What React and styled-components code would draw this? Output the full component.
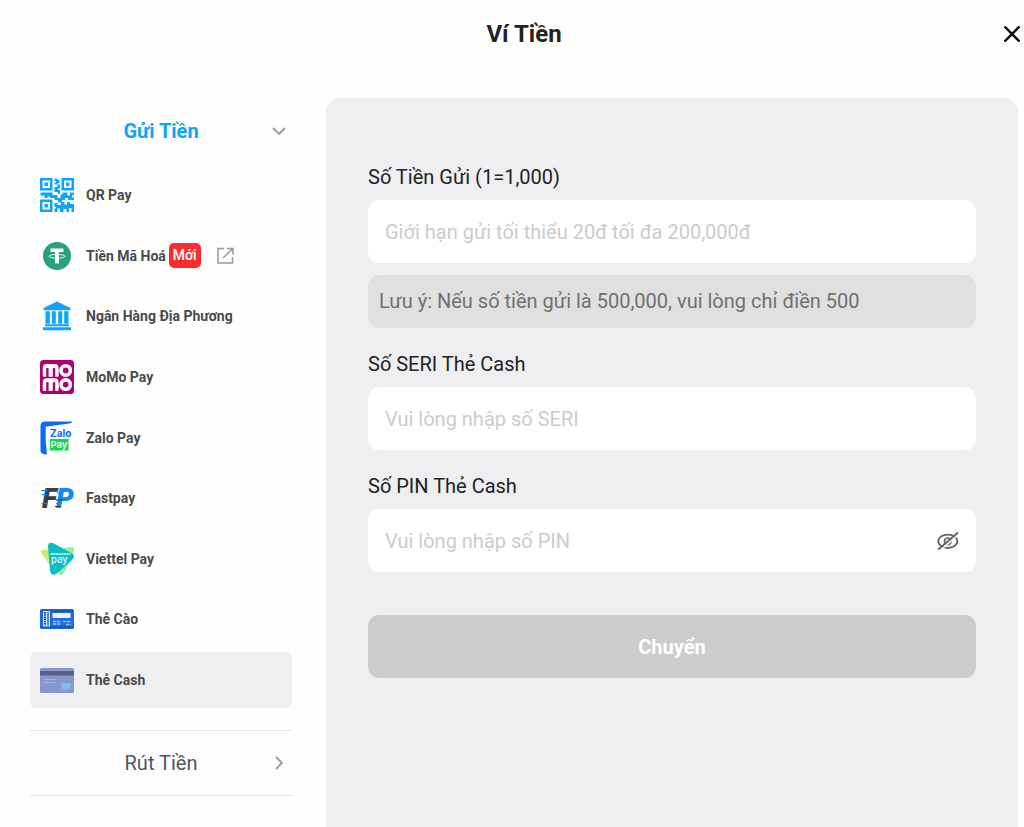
import React, { useState } from "react";
import styled, { createGlobalStyle } from "styled-components";

const GlobalStyle = createGlobalStyle`
  *, *::before, *::after { box-sizing: border-box; }
  body {
    margin: 0;
    background: #fefefe;
    color: #222;
    font-family: Roboto, "Liberation Sans", sans-serif;
    font-size: 20px;
    line-height: 24px;
  }
  button, input { font: inherit; }
`;

const Page = styled.div`
  min-height: 100vh;
  display: flex;
  flex-direction: column;
`;

const Header = styled.header`
  display: grid;
  grid-template-columns: 1fr auto 1fr;
  align-items: center;
  height: 98px;
  padding: 0 4px 30px 28px;
`;

const Title = styled.h1`
  grid-column: 2;
  margin: 0;
  font-size: 24px;
  line-height: 32px;
  font-weight: 700;
`;

const IconButton = styled.button`
  display: flex;
  padding: 0;
  border: 0;
  background: none;
  color: ${(p) => p.$color};
  cursor: pointer;
`;

const CloseButton = styled(IconButton)`
  justify-self: end;
`;

const Body = styled.div`
  flex: 1;
  display: flex;
  gap: 34px;
  padding: 0 6px 0 30px;
`;

const Sidebar = styled.nav`
  flex: 0 0 262px;
`;

const SectionButton = styled.button`
  display: grid;
  grid-template-columns: 1fr auto 1fr;
  align-items: center;
  width: 100%;
  height: 66px;
  padding: 0 6px;
  border: 0 solid #e6e6e6;
  border-width: ${(p) => (p.$ruled ? "1px 0" : "0")};
  background: none;
  color: ${(p) => (p.$active ? "#0ba5ff" : "#555")};
  font-weight: ${(p) => (p.$active ? 700 : 400)};
  cursor: pointer;

  span { grid-column: 2; }
  svg { justify-self: end; color: #999; }
`;

const MethodList = styled.ul`
  display: flex;
  flex-direction: column;
  justify-content: space-between;
  height: 541px;
  margin: 3px 0 22px;
  padding: 0;
  list-style: none;
`;

const Method = styled.a`
  display: flex;
  align-items: center;
  height: 56px;
  padding: 0 10px;
  border-radius: 6px;
  background: ${(p) => (p.$active ? "#efeff1" : "transparent")};
  color: #4a4a4a;
  font-size: 14px;
  line-height: 20px;
  font-weight: 700;
  text-decoration: none;
`;

const MethodIcon = styled.span`
  display: flex;
  flex: none;
  margin-right: 12px;
`;

const Badge = styled.span`
  margin: 0 16px 0 3px;
  padding: 0 4px;
  border-radius: 5px;
  background: #fb2c2f;
  color: #fff;
  line-height: 25px;
  font-weight: 500;
`;

const Panel = styled.main`
  flex: 1;
  min-width: 0;
  padding: 67px 42px 42px;
  border-radius: 14px 14px 0 0;
  background: #efeff1;
`;

const Field = styled.div`
  margin-bottom: 24px;
`;

const Label = styled.label`
  display: block;
  margin-bottom: 11px;
  color: #222;
`;

const InputBox = styled.div`
  display: flex;
  align-items: center;
  height: 63px;
  padding: 0 17px;
  border-radius: 11px;
  background: #fff;
`;

const Input = styled.input`
  flex: 1;
  min-width: 0;
  padding: 0;
  border: 0;
  outline: 0;
  background: none;
  color: #222;

  &::placeholder { color: #ccc; opacity: 1; }
`;

const Note = styled.p`
  margin: 12px 0 0;
  padding: 14px 11px 15px;
  border-radius: 11px;
  background: #e0e0e0;
  color: #707070;
`;

const Submit = styled.button`
  width: 100%;
  height: 63px;
  margin-top: 19px;
  border: 0;
  border-radius: 11px;
  background: #ccc;
  color: #fff;
  font-weight: 700;
`;

function Svg({ w = 34, h = 34, box, children }) {
  return (
    <svg width={w} height={h} viewBox={box || `0 0 ${w} ${h}`} fill="none" aria-hidden="true">
      {children}
    </svg>
  );
}

function QrFinder({ x, y }) {
  return (
    <>
      <rect x={x + 1.25} y={y + 1.25} width="10" height="10" stroke="#0ba5ff" strokeWidth="2.5" />
      <rect x={x + 4.5} y={y + 4.5} width="3.5" height="3.5" fill="#0ba5ff" />
    </>
  );
}

function QrIcon() {
  return (
    <Svg>
      <QrFinder x={0} y={0} />
      <QrFinder x={21.5} y={0} />
      <QrFinder x={0} y={21.5} />
      <path
        d="M14.500 0.500h3v1.500h2v3h-2v1.500h-3v-2h1.500v-1.500h-1.500zM17.500 6.500h2.500v4h-2v1.500h2V16h-2v-2h-3.500V9h3zM0.500 14.500h12v2.500h5v3h3v-3.500h2V14.500h5v3h2.500v-3H34v2.500h-2v2.500h2V22h-6v-2h-3v2h-3v2.500h-4V22h-3.500v-2H10v-1.500H7.500V20h-3v-2.500H0.500zM14.500 25h3v2h3.500v-3h3.500v2.500h2.500v-2.500h3v2h4v8h-2.500v-4H29v4h-2.500v-3h-3v3H20v-3.500h-2.500V34h-3v-3.500h1.500V29h-1.500z"
        fill="#0ba5ff"
      />
    </Svg>
  );
}

function TetherIcon() {
  return (
    <Svg>
      <circle cx="17" cy="17" r="14" fill="#26a17b" />
      <path d="M10.500 9.500h13v3.600h-4.600v11.400h-3.800V13.100h-4.600z" fill="#fff" />
      <ellipse cx="17" cy="17.300" rx="8" ry="1.900" stroke="#fff" strokeWidth="0.900" />
    </Svg>
  );
}

function BankIcon() {
  return (
    <Svg>
      <path
        d="M17 2.500 30.500 9v2.200h-27V9zM5.500 12.200h4.300v12.600H5.500zM11.800 12.200h4v12.600h-4zM18.200 12.200h4v12.600h-4zM24.200 12.200h4.300v12.600h-4.300zM5 25.300h24v2H5zM3 28.300h28v3H3z"
        fill="#0ba5ff"
      />
    </Svg>
  );
}

function MomoRow({ y }) {
  return (
    <>
      <rect x="2.800" y={y} width="15.800" height="12" rx="4" fill="#fff" />
      <rect x="2.800" y={y + 6} width="15.800" height="6.800" rx="1" fill="#fff" />
      <rect x="6.200" y={y + 3.800} width="2.400" height="10" rx="1.200" fill="#ae0070" />
      <rect x="12.800" y={y + 3.800} width="2.400" height="10" rx="1.200" fill="#ae0070" />
      <circle cx="25.700" cy={y + 6.400} r="4.700" stroke="#fff" strokeWidth="3.600" />
    </>
  );
}

function MomoIcon() {
  return (
    <Svg>
      <rect width="34" height="34" rx="3.500" fill="#ae0070" />
      <MomoRow y={4} />
      <MomoRow y={18.2} />
    </Svg>
  );
}

function ZaloIcon() {
  return (
    <Svg>
      <path d="M32.500 0.500H5Q0.500 0.500 0.500 5V29.500Q0.500 33.500 7 33.500Q5 20 5.800 5.800Q18 4 31 2.200Z" fill="#0a6cf5" />
      <text x="10" y="16" fontSize="10" fontWeight="700" fontFamily="Inter, sans-serif" fill="#0a6cf5">Zalo</text>
      <rect x="10" y="18" width="18.500" height="11.500" fill="#0ed652" />
      <text x="10.500" y="27" fontSize="9.500" fontWeight="600" fontFamily="Inter, sans-serif" fill="#fff">Pay</text>
    </Svg>
  );
}

function FastpayIcon() {
  return (
    <Svg>
      <g fontSize="28" fontWeight="900" fontStyle="italic" fontFamily="Roboto, sans-serif">
        <text x="2" y="27" fill="#3a3f47">F</text>
        <text x="16" y="27" fill="#0d8bf2">P</text>
      </g>
      <path d="M1 9.500h7M2 13.500h5M1.500 22.500h6M17 12h5M16 22.500h6" stroke="#0d8bf2" strokeWidth="1.200" />
      <path d="M16 19h7M15 25.500h5" stroke="#3a3f47" strokeWidth="1.200" />
    </Svg>
  );
}

function ViettelIcon() {
  return (
    <Svg>
      <path d="M1 10.500Q-0.500 8 3 8L12 7 11 25Z" fill="#c9ee6c" />
      <path d="M24 6 33 5Q35.500 5.500 34 9L25 29Q22 35 18.500 32Z" fill="#93eda6" />
      <path d="M8 4Q8.500-1 14 1.500L32 11.500Q36 14 32 18L17 31.500Q11 35 10 28.500Z" fill="#08bfc2" />
      <path d="M10.500 12h20" stroke="#fff" strokeWidth="1.600" strokeDasharray="2.200 0.500" />
      <text x="11" y="20.500" fontSize="10.500" fontWeight="400" fontFamily="Roboto, sans-serif" fill="#fff">pay</text>
    </Svg>
  );
}

function ScratchCardIcon() {
  return (
    <Svg h={20}>
      <rect width="34" height="20" rx="1.500" fill="#1d6cdf" />
      <path d="M1 1h32v2H1zM1 17h32v2H1z" fill="#1658c4" />
      <rect x="3" y="2" width="7" height="15.500" fill="#d3e3f5" />
      <path d="M5 3v13.500" stroke="#24487c" strokeWidth="2" strokeDasharray="1.500 0.700" />
      <path d="M8 3v13.500" stroke="#24487c" strokeWidth="1.200" />
      <rect x="12.500" y="4" width="18" height="5" fill="#edf3f6" />
      <path d="M13 12.500h8M13 15h8M23 12.500h8M26 15.500h5" stroke="#9ec6fa" strokeWidth="1.300" strokeDasharray="3 0.700" />
    </Svg>
  );
}

function CashCardIcon() {
  return (
    <Svg h={25}>
      <rect width="34" height="25" rx="1.500" fill="#8797cc" />
      <path d="M0 3h34v4.500H0z" fill="#54608a" />
      <path d="M3 11.500h14M3 14.500h14" stroke="#91c5ef" strokeWidth="1.200" strokeDasharray="2.500 1" />
      <rect x="21" y="15" width="10" height="6.500" rx="1" fill="#83b8ea" />
    </Svg>
  );
}

const METHODS = [
  { label: "QR Pay", Icon: QrIcon },
  { label: "Tiền Mã Hoá", Icon: TetherIcon, badge: "Mới" },
  { label: "Ngân Hàng Địa Phương", Icon: BankIcon },
  { label: "MoMo Pay", Icon: MomoIcon },
  { label: "Zalo Pay", Icon: ZaloIcon },
  { label: "Fastpay", Icon: FastpayIcon },
  { label: "Viettel Pay", Icon: ViettelIcon },
  { label: "Thẻ Cào", Icon: ScratchCardIcon },
  { label: "Thẻ Cash", Icon: CashCardIcon },
];

export default function App() {
  const [active, setActive] = useState("Thẻ Cash");
  const [showPin, setShowPin] = useState(false);

  return (
    <Page>
      <GlobalStyle />
      <Header>
        <Title>Ví Tiền</Title>
        <CloseButton type="button" aria-label="Đóng" $color="#111">
          <Svg w={16} h={16}>
            <path d="M1.200 1.200 14.800 14.800M14.800 1.200 1.200 14.800" stroke="currentColor" strokeWidth="2.400" strokeLinecap="round" />
          </Svg>
        </CloseButton>
      </Header>
      <Body>
        <Sidebar>
          <SectionButton type="button" aria-expanded="true" $active>
            <span>Gửi Tiền</span>
            <Svg w={14} h={8}>
              <path d="M1 1l6 6 6-6" stroke="currentColor" strokeWidth="1.800" />
            </Svg>
          </SectionButton>
          <MethodList>
            {METHODS.map(({ label, Icon, badge }) => (
              <li key={label}>
                <Method href="#" $active={label === active} onClick={() => setActive(label)}>
                  <MethodIcon><Icon /></MethodIcon>
                  {label}
                  {badge && (
                    <>
                      <Badge>{badge}</Badge>
                      <Svg w={17} h={17}>
                        <path d="M7 1.500H1v14.500h14.500V10M10 1.500h6v6M15.500 2 6 11" stroke="#999" strokeWidth="1.500" />
                      </Svg>
                    </>
                  )}
                </Method>
              </li>
            ))}
          </MethodList>
          <SectionButton type="button" aria-expanded="false" $ruled>
            <span>Rút Tiền</span>
            <Svg w={14} h={14}>
              <path d="M4 1l6 6-6 6" stroke="currentColor" strokeWidth="1.800" />
            </Svg>
          </SectionButton>
        </Sidebar>
        <Panel>
          <form onSubmit={(e) => e.preventDefault()}>
            <Field>
              <Label htmlFor="amount">Số Tiền Gửi (1=1,000)</Label>
              <InputBox>
                <Input id="amount" inputMode="numeric" placeholder="Giới hạn gửi tối thiểu 20đ tối đa 200,000đ" />
              </InputBox>
              <Note>Lưu ý: Nếu số tiền gửi là 500,000, vui lòng chỉ điền 500</Note>
            </Field>
            <Field>
              <Label htmlFor="serial">Số SERI Thẻ Cash</Label>
              <InputBox>
                <Input id="serial" placeholder="Vui lòng nhập số SERI" />
              </InputBox>
            </Field>
            <Field>
              <Label htmlFor="pin">Số PIN Thẻ Cash</Label>
              <InputBox>
                <Input id="pin" type={showPin ? "text" : "password"} placeholder="Vui lòng nhập số PIN" />
                <IconButton type="button" aria-label="Hiện mã PIN" $color="#666" onClick={() => setShowPin(!showPin)}>
                  <Svg w={22} h={20}>
                    <ellipse cx="10.800" cy="10.300" rx="9.600" ry="6.700" stroke="currentColor" strokeWidth="1.900" />
                    <circle cx="10.800" cy="10.300" r="3.300" stroke="currentColor" strokeWidth="1.700" />
                    <path d="M2.500 20 22 3" stroke="#fff" strokeWidth="1.500" />
                    <path d="M1.200 18.500 21 1.500" stroke="currentColor" strokeWidth="2" />
                  </Svg>
                </IconButton>
              </InputBox>
            </Field>
            <Submit type="submit">Chuyển</Submit>
          </form>
        </Panel>
      </Body>
    </Page>
  );
}
